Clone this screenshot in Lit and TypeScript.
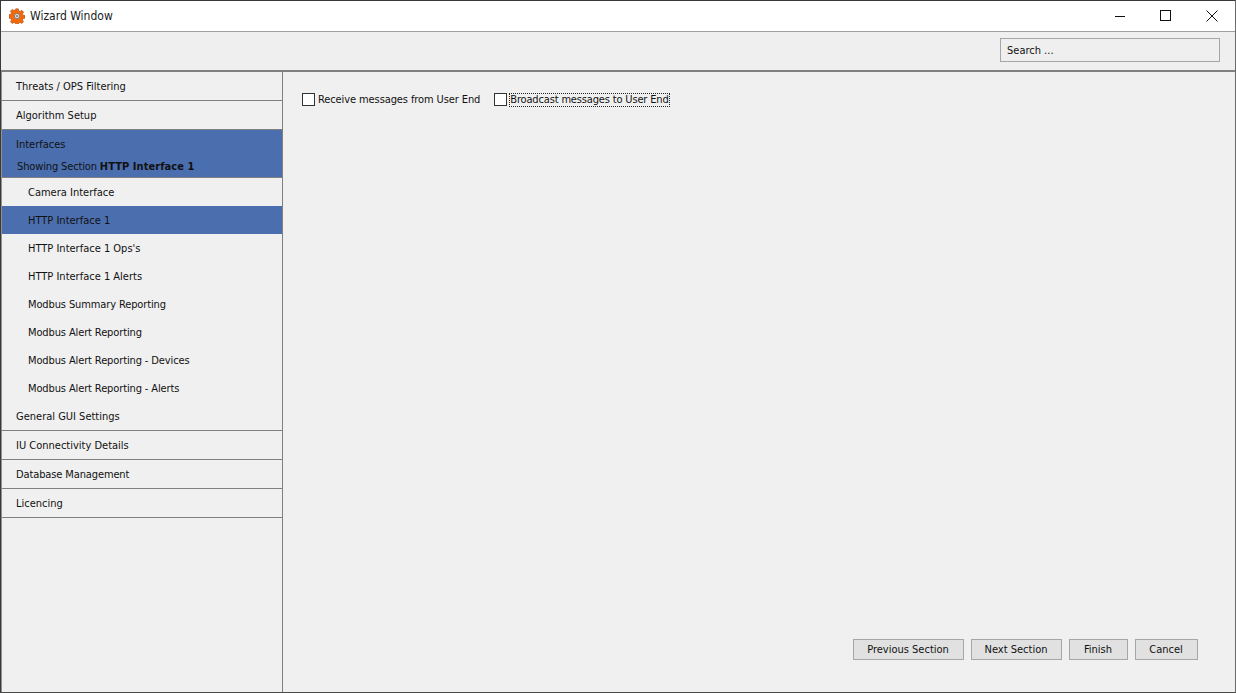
import { LitElement, html, css } from "lit";
import { customElement } from "lit/decorators.js";

const before = ["Threats / OPS Filtering", "Algorithm Setup"];
const subs = ["Camera Interface", "HTTP Interface 1", "HTTP Interface 1 Ops's", "HTTP Interface 1 Alerts", "Modbus Summary Reporting", "Modbus Alert Reporting", "Modbus Alert Reporting - Devices", "Modbus Alert Reporting - Alerts"];
const after = ["IU Connectivity Details", "Database Management", "Licencing"];

@customElement("app-root")
export class AppRoot extends LitElement {
  static styles = css`
    :host { display: flex; flex-direction: column; width: 1236px; height: 693px; box-sizing: border-box; overflow: hidden; background: #f0f0f0; color: #111; border: 1px solid #3a3a36; border-right-color: #6a6a6a; border-bottom-color: #4a4a46; font: 11px/14px "DejaVu Sans Condensed", "DejaVu Sans", sans-serif; }
    .title { height: 30px; flex: none; display: flex; align-items: center; background: #fff; border-bottom: 1px solid #a0a0a0; padding-left: 8px; font-size: 12px; color: #1a1a1a; }
    .logo { width: 16px; height: 16px; margin-right: 5px; flex: none; }
    .spacer { flex: 1; }
    .win { width: 46px; height: 30px; display: flex; align-items: center; justify-content: center; }
    .win svg { width: 12px; height: 12px; fill: none; stroke: #111; stroke-width: 1; }
    .tools { height: 36px; padding-bottom: 2px; flex: none; display: flex; align-items: center; justify-content: flex-end; padding-right: 15px; background: #efefef; border-bottom: 2px solid #808080; }
    .search { width: 212px; height: 21px; padding: 1px 0 0 6px; border: 1px solid #a6a6a6; display: flex; align-items: center; }
    .main { flex: 1; display: flex; min-height: 0; }
    .side { width: 280px; flex: none; border-right: 1px solid #808080; border-left: 1px solid #909090; }
    .row { height: 27px; padding: 1px 0 0 14px; display: flex; align-items: center; border-bottom: 1px solid #808080; }
    .open { height: 47px; background: #4b6eae; border-bottom: 1px solid #808080; padding-left: 14px; display: flex; flex-direction: column; }
    .open div { display: flex; align-items: center; }
    .open .h { height: 26px; padding: 2px 0 1px; }
    .open .s { padding-left: 1px; height: 16px; letter-spacing: -0.14px; }
    .open b { margin-left: 3px; font-weight: 700; letter-spacing: 0.06px; }
    .sub { height: 27px; padding: 1px 0 0 26px; display: flex; align-items: center; }
    .sub.on { background: #4b6eae; }
    .tight { letter-spacing: -0.12px; }
    .content { flex: 1; display: flex; flex-direction: column; padding: 20px 37px 32px 19px; }
    .checks { display: flex; gap: 14px; height: 15px; align-items: center; letter-spacing: -0.1px; }
    .check { display: flex; align-items: center; gap: 3px; }
    .box { width: 11px; height: 11px; border: 1px solid #333; background: #fff; flex: none; }
    .focus { outline: 1px dotted #222; outline-offset: 0; line-height: 12px; letter-spacing: -0.16px; }
    .grow { flex: 1; }
    .btns { display: flex; justify-content: flex-end; gap: 7px; }
    .btn { height: 19px; padding-right: 1px; border: 1px solid #a6a6a6; background: #e1e1e1; display: flex; align-items: center; justify-content: center; }
  `;

  render() {
    return html`
      <div class="title">
        <svg class="logo" viewBox="0 0 16 16"><path fill="#f06a0c" stroke="#9a3a06" stroke-width=".5" d="M6.7 .8h2.6l.4 2 1.3.6 1.8-1.1 1.8 1.8-1.1 1.8.6 1.3 2 .4v2.6l-2 .4-.6 1.3 1.1 1.8-1.8 1.8-1.8-1.1-1.3.6-.4 2H6.7l-.4-2-1.3-.6-1.8 1.1-1.8-1.8 1.1-1.8-.6-1.3-2-.4V6.7l2-.4.6-1.3-1.1-1.8 1.8-1.8 1.8 1.1 1.3-.6z"/><circle cx="8" cy="8" r="2.6" fill="#d8d8d8" stroke="#7a7a7a" stroke-width=".8"/><circle cx="8" cy="8" r="1" fill="#808080"/></svg>
        <span>Wizard Window</span>
        <span class="spacer"></span>
        <div class="win"><svg viewBox="0 0 12 12"><path d="M1 6.5h10"/></svg></div>
        <div class="win"><svg viewBox="0 0 12 12"><rect x=".5" y=".5" width="10" height="10"/></svg></div>
        <div class="win"><svg viewBox="0 0 12 12"><path d="M.5 .5l11 11M11.5 .5l-11 11"/></svg></div>
      </div>
      <div class="tools"><div class="search">Search ...</div></div>
      <div class="main">
        <div class="side">
          ${before.map((t) => html`<div class="row">${t}</div>`)}
          <div class="open"><div class="h">Interfaces</div><div class="s">Showing Section <b>HTTP Interface 1</b></div></div>
          ${subs.map((t, i) => html`<div class="sub ${i === 1 ? "on" : ""} ${t.startsWith("Modbus") ? "tight" : ""}">${t}</div>`)}
          <div class="row">General GUI Settings</div>
          ${after.map((t) => html`<div class="row ${t.startsWith("Database") ? "tight" : ""}">${t}</div>`)}
        </div>
        <div class="content">
          <div class="checks">
            <div class="check"><span class="box"></span><span>Receive messages from User End</span></div>
            <div class="check"><span class="box"></span><span class="focus">Broadcast messages to User End</span></div>
          </div>
          <div class="grow"></div>
          <div class="btns">
            <div class="btn" style="width:108px">Previous Section</div>
            <div class="btn" style="width:88px">Next Section</div>
            <div class="btn" style="width:56px">Finish</div>
            <div class="btn" style="width:60px">Cancel</div>
          </div>
        </div>
      </div>
    `;
  }
}
